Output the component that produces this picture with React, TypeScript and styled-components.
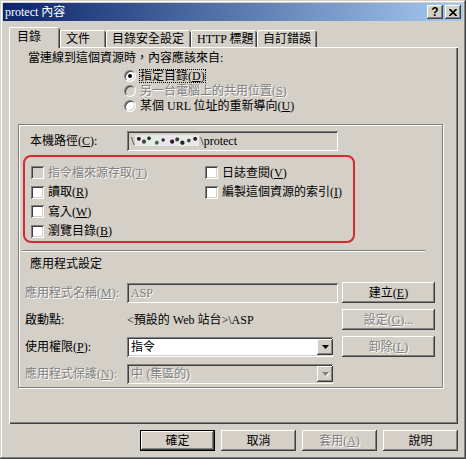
import React from "react";
import styled, { createGlobalStyle, css } from "styled-components";

const FACE = "#d4d0c8";
const SHADOW = "#808080";
const DARK = "#404040";

const GlobalStyle = createGlobalStyle`
  html, body {
    margin: 0;
    padding: 0;
    background: ${FACE};
  }
  body {
    font-family: "Liberation Serif", "Noto Sans CJK TC", serif;
    font-size: 12px;
    line-height: 14px;
    color: #000;
  }
  u {
    text-underline-offset: 1px;
  }
`;

const dimText = css`
  color: ${SHADOW};
  text-shadow: 1px 1px #fff;
`;

const raised = css`
  box-shadow: inset -1px -1px ${DARK}, inset 1px 1px #fff,
    inset -2px -2px ${SHADOW}, inset 2px 2px ${FACE};
`;

const sunken = css`
  box-shadow: inset 1px 1px ${SHADOW}, inset -1px -1px #fff,
    inset 2px 2px ${DARK}, inset -2px -2px ${FACE};
`;

const Window = styled.div`
  width: 466px;
  height: 459px;
  box-sizing: border-box;
  padding: 3px;
  background: ${FACE};
  box-shadow: inset -1px -1px ${DARK}, inset 1px 1px ${FACE},
    inset -2px -2px ${SHADOW}, inset 2px 2px #fff;
  display: flex;
  flex-direction: column;
`;

const TitleBar = styled.div`
  height: 18px;
  display: flex;
  align-items: center;
  padding: 0 2px 0 2px;
  background: linear-gradient(to right, #0a246a, #a6caf0);
  color: #fff;
`;

const Title = styled.span`
  flex: 1;
  font-size: 12px;
`;

const TitleButton = styled.span`
  width: 16px;
  height: 14px;
  margin-left: 2px;
  background: ${FACE};
  ${raised};
  display: flex;
  align-items: center;
  justify-content: center;
  font-family: "Liberation Sans", sans-serif;
  font-weight: bold;
  font-size: 12px;
  color: #000;
`;

const TabStrip = styled.div`
  margin-top: 6px;
  height: 20px;
  padding-left: 6px;
  display: flex;
  align-items: flex-end;
`;

const Tab = styled.div<{ $w: number; $active?: boolean }>`
  width: ${(p) => p.$w}px;
  height: ${(p) => (p.$active ? 21 : 17)}px;
  margin-bottom: ${(p) => (p.$active ? -1 : 0)}px;
  box-sizing: border-box;
  padding-left: ${(p) => (p.$active ? 8 : 6)}px;
  padding-top: ${(p) => (p.$active ? 3 : 2)}px;
  background: ${FACE};
  position: relative;
  z-index: ${(p) => (p.$active ? 1 : 0)};
  border-radius: 2px 2px 0 0;
  box-shadow: inset 1px 0 #fff, inset 0 1px #fff, inset -1px 0 ${DARK},
    inset -2px 0 ${SHADOW};
  white-space: nowrap;
`;

const Panel = styled.div`
  height: 377px;
  margin: 0 5px 0 6px;
  box-sizing: border-box;
  padding-top: 4px;
  box-shadow: inset 1px 1px #fff, inset -1px -1px ${DARK},
    inset -2px -2px ${SHADOW};
  display: flex;
  flex-direction: column;
`;

const Intro = styled.div`
  padding-left: 19px;
`;

const RadioList = styled.div`
  margin: 3px 0 0 115px;
  display: flex;
  flex-direction: column;
`;

const RadioRow = styled.label<{ $disabled?: boolean }>`
  height: 15px;
  display: flex;
  align-items: center;
  gap: 4px;
  white-space: nowrap;
  ${(p) => p.$disabled && dimText};
`;

const Radio = styled.span<{ $checked?: boolean; $disabled?: boolean }>`
  width: 12px;
  height: 12px;
  box-sizing: border-box;
  border-radius: 50%;
  border: 1px solid;
  border-color: ${SHADOW} #fff #fff ${SHADOW};
  background: ${(p) => (p.$disabled ? FACE : "#fff")};
  box-shadow: inset 1px 1px ${DARK}, inset -1px -1px ${FACE};
  display: flex;
  align-items: center;
  justify-content: center;
  flex-shrink: 0;

  &::after {
    content: "";
    width: 4px;
    height: 4px;
    border-radius: 50%;
    background: #000;
    display: ${(p) => (p.$checked ? "block" : "none")};
  }
`;

const FocusText = styled.span`
  border: 1px dotted #000;
  margin-left: -1px;
  padding: 0 0 0 0;
  line-height: 12px;
`;

const Frame = styled.div`
  margin: 11px 0 0 9px;
  width: 425px;
  height: 264px;
  box-sizing: border-box;
  border: 1px solid ${SHADOW};
  box-shadow: inset 1px 1px #fff, 1px 1px #fff;
  display: flex;
  flex-direction: column;
`;

const PathRow = styled.div`
  margin-top: 6px;
  height: 20px;
  padding-left: 11px;
  display: flex;
  align-items: center;
`;

const Label = styled.span<{ $w: number; $disabled?: boolean }>`
  width: ${(p) => p.$w}px;
  flex-shrink: 0;
  white-space: nowrap;
  ${(p) => p.$disabled && dimText};
`;

const Field = styled.div<{ $w: number; $white?: boolean; $disabled?: boolean }>`
  width: ${(p) => p.$w}px;
  height: 20px;
  box-sizing: border-box;
  padding: 0 2px 0 4px;
  background: ${(p) => (p.$white ? "#fff" : FACE)};
  ${sunken};
  display: flex;
  align-items: center;
  white-space: nowrap;
  ${(p) => p.$disabled && dimText};
`;

const FieldText = styled.span<{ $sans?: boolean }>`
  flex: 1;
  ${(p) =>
    p.$sans &&
    css`
      font-family: "Liberation Sans", "Noto Sans CJK TC", sans-serif;
    `};
`;

const Redacted = styled.span`
  display: inline-block;
  width: 64px;
  height: 11px;
  margin: 0 1px;
  background: radial-gradient(circle at 6% 35%, #222 0 1.4px, transparent 2.4px),
    radial-gradient(circle at 14% 60%, #444 0 1.6px, transparent 2.6px),
    radial-gradient(circle at 22% 30%, #2a2a2a 0 1.3px, transparent 2.3px),
    radial-gradient(circle at 34% 70%, #555 0 1.4px, transparent 2.4px),
    radial-gradient(circle at 44% 45%, #333 0 1.2px, transparent 2.2px),
    radial-gradient(circle at 58% 60%, #222 0 1.6px, transparent 2.6px),
    radial-gradient(circle at 66% 40%, #3a3a3a 0 1.5px, transparent 2.5px),
    radial-gradient(circle at 74% 70%, #222 0 1.6px, transparent 2.6px),
    radial-gradient(circle at 84% 50%, #444 0 1.3px, transparent 2.3px),
    radial-gradient(circle at 94% 35%, #222 0 1.4px, transparent 2.4px),
    linear-gradient(90deg, #efe4ec, #e0efe2 30%, #eee2f0 55%, #e3eee4 80%, #f0e6ee);
  filter: blur(0.4px);
  vertical-align: -1px;
`;

const Annotation = styled.div`
  margin: 4px 0 0 4px;
  width: 332px;
  height: 88px;
  box-sizing: border-box;
  border: 2px solid #d42a30;
  border-radius: 8px;
  padding: 6px 0 0 6px;
  display: flex;
`;

const CheckColumn = styled.div<{ $w?: number }>`
  width: ${(p) => (p.$w ? `${p.$w}px` : "auto")};
  display: flex;
  flex-direction: column;
`;

const CheckRow = styled.label<{ $disabled?: boolean }>`
  height: 19.5px;
  display: flex;
  align-items: center;
  gap: 4px;
  white-space: nowrap;
  ${(p) => p.$disabled && dimText};
`;

const CheckBox = styled.span<{ $disabled?: boolean }>`
  width: 13px;
  height: 13px;
  flex-shrink: 0;
  background: ${(p) => (p.$disabled ? FACE : "#fff")};
  ${sunken};
`;

const Separator = styled.div`
  margin: 7px 0 0 3px;
  width: 403px;
  border-top: 1px solid ${SHADOW};
  border-bottom: 1px solid #fff;
`;

const SectionTitle = styled.div`
  margin: 5px 0 0 11px;
`;

const FormRows = styled.div`
  margin-top: 11px;
  display: flex;
  flex-direction: column;
  gap: 6px;
`;

const FormRow = styled.div`
  height: 21px;
  padding-left: 6px;
  display: flex;
  align-items: center;
`;

const Slot = styled.div`
  width: 215px;
  flex-shrink: 0;
  display: flex;
  align-items: center;
`;

const ComboButton = styled.span<{ $disabled?: boolean }>`
  width: 16px;
  height: 16px;
  margin-right: -2px;
  background: ${FACE};
  ${raised};
  display: flex;
  align-items: center;
  justify-content: center;
  flex-shrink: 0;

  svg {
    fill: ${(p) => (p.$disabled ? SHADOW : "#000")};
    filter: ${(p) => (p.$disabled ? "drop-shadow(1px 1px 0 #fff)" : "none")};
  }
`;

const Button = styled.button<{ $w: number; $default?: boolean }>`
  width: ${(p) => p.$w}px;
  height: 21px;
  box-sizing: border-box;
  padding: 0;
  border: ${(p) => (p.$default ? "1px solid #000" : "0")};
  background: ${FACE};
  ${raised};
  font: inherit;
  font-size: 12px;
  color: #000;
  white-space: nowrap;

  &:disabled {
    ${dimText};
  }
`;

const Footer = styled.div`
  margin-top: 6px;
  padding-right: 5px;
  display: flex;
  justify-content: flex-end;
  gap: 6px;
`;

const Arrow = () => (
  <svg width="7" height="4" viewBox="0 0 7 4">
    <path d="M0 0h7L3.5 4z" />
  </svg>
);

const Combo = ({ text, white, disabled, sans }: { text: string; white?: boolean; disabled?: boolean; sans?: boolean }) => (
  <Field $w={206} $white={white} $disabled={disabled}>
    <FieldText $sans={sans}>{text}</FieldText>
    <ComboButton $disabled={disabled}>
      <Arrow />
    </ComboButton>
  </Field>
);

const tabs = [
  { label: "目錄", w: 51, active: true },
  { label: "文件", w: 46 },
  { label: "目錄安全設定", w: 85 },
  { label: "HTTP 標題", w: 66 },
  { label: "自訂錯誤", w: 60 },
];

export default function App() {
  return (
    <>
      <GlobalStyle />
      <Window>
        <TitleBar>
          <Title>protect 內容</Title>
          <TitleButton>?</TitleButton>
          <TitleButton>
            <svg width="8" height="7" viewBox="0 0 8 7">
              <path d="M0.5 0 L7.5 7 M7.5 0 L0.5 7" stroke="#000" strokeWidth="1.7" />
            </svg>
          </TitleButton>
        </TitleBar>

        <TabStrip>
          {tabs.map((t) => (
            <Tab key={t.label} $w={t.w} $active={t.active}>
              {t.label}
            </Tab>
          ))}
        </TabStrip>

        <Panel>
          <Intro>當連線到這個資源時，內容應該來自:</Intro>
          <RadioList>
            <RadioRow>
              <Radio $checked />
              <FocusText>
                指定目錄(<u>D</u>)
              </FocusText>
            </RadioRow>
            <RadioRow $disabled>
              <Radio $disabled />
              <span>
                另一台電腦上的共用位置(<u>S</u>)
              </span>
            </RadioRow>
            <RadioRow>
              <Radio />
              <span>
                某個 URL 位址的重新導向(<u>U</u>)
              </span>
            </RadioRow>
          </RadioList>

          <Frame>
            <PathRow>
              <Label $w={97}>
                本機路徑(<u>C</u>):
              </Label>
              <Field $w={211}>
                <FieldText>
                  \<Redacted />\protect
                </FieldText>
              </Field>
            </PathRow>

            <Annotation>
              <CheckColumn $w={174}>
                <CheckRow $disabled>
                  <CheckBox $disabled />
                  <span>
                    指令檔來源存取(<u>T</u>)
                  </span>
                </CheckRow>
                <CheckRow>
                  <CheckBox />
                  <span>
                    讀取(<u>R</u>)
                  </span>
                </CheckRow>
                <CheckRow>
                  <CheckBox />
                  <span>
                    寫入(<u>W</u>)
                  </span>
                </CheckRow>
                <CheckRow>
                  <CheckBox />
                  <span>
                    瀏覽目錄(<u>B</u>)
                  </span>
                </CheckRow>
              </CheckColumn>
              <CheckColumn>
                <CheckRow>
                  <CheckBox />
                  <span>
                    日誌查閱(<u>V</u>)
                  </span>
                </CheckRow>
                <CheckRow>
                  <CheckBox />
                  <span>
                    編製這個資源的索引(<u>I</u>)
                  </span>
                </CheckRow>
              </CheckColumn>
            </Annotation>

            <Separator />
            <SectionTitle>應用程式設定</SectionTitle>

            <FormRows>
              <FormRow>
                <Label $w={102} $disabled>
                  應用程式名稱(<u>M</u>):
                </Label>
                <Slot>
                  <Field $w={211} $disabled>
                    <FieldText>ASP</FieldText>
                  </Field>
                </Slot>
                <Button $w={93}>
                  建立(<u>E</u>)
                </Button>
              </FormRow>
              <FormRow>
                <Label $w={102}>啟動點:</Label>
                <Slot>{"<預設的 Web 站台>\\ASP"}</Slot>
                <Button $w={93} disabled>
                  設定(<u>G</u>)...
                </Button>
              </FormRow>
              <FormRow>
                <Label $w={102}>
                  使用權限(<u>P</u>):
                </Label>
                <Slot>
                  <Combo text="指令" white />
                </Slot>
                <Button $w={93} disabled>
                  卸除(<u>L</u>)
                </Button>
              </FormRow>
              <FormRow>
                <Label $w={102} $disabled>
                  應用程式保護(<u>N</u>):
                </Label>
                <Slot>
                  <Combo text="中 (集區的)" disabled sans />
                </Slot>
              </FormRow>
            </FormRows>
          </Frame>
        </Panel>

        <Footer>
          <Button $w={75} $default>
            確定
          </Button>
          <Button $w={75}>取消</Button>
          <Button $w={75} disabled>
            套用(<u>A</u>)
          </Button>
          <Button $w={75}>說明</Button>
        </Footer>
      </Window>
    </>
  );
}
